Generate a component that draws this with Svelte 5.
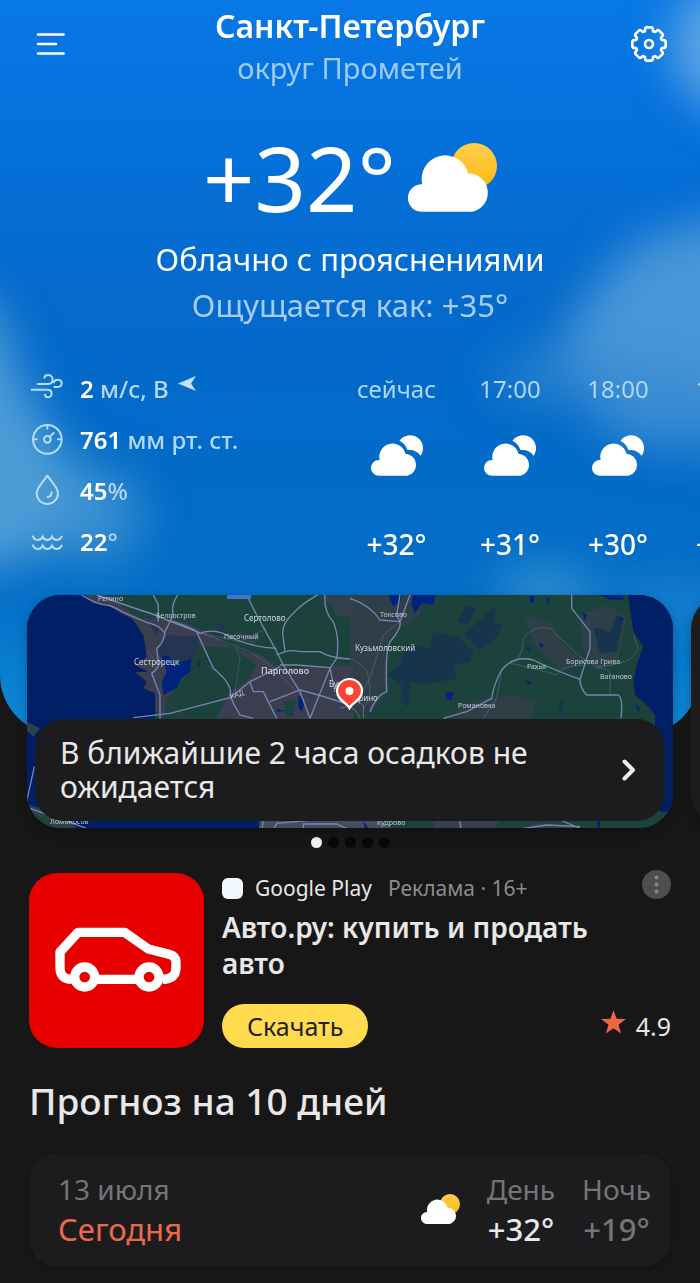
<script>
  const details = [
    { icon: "wind", value: "2", unit: " м/с, В" },
    { icon: "pressure", value: "761", unit: " мм рт. ст." },
    { icon: "humidity", value: "45", unit: "%" },
    { icon: "water", value: "22", unit: "°" },
  ];

  const hours = [
    { time: "сейчас", temp: "+32°" },
    { time: "17:00", temp: "+31°" },
    { time: "18:00", temp: "+30°" },
    { time: "19:00", temp: "+29°" },
  ];

  const slides = 5;
  let active = $state(0);

  // eight rounded teeth around the centre of a 38x38 box
  function gearPath() {
    const at = (r, deg) => {
      const a = (deg * Math.PI) / 180;
      return `${(19 + r * Math.sin(a)).toFixed(2)} ${(19 - r * Math.cos(a)).toFixed(2)}`;
    };
    let d = "";
    for (let i = 0; i < 8; i++) {
      const t = i * 45;
      d += `${i ? "L" : "M"}${at(15, t - 15)}Q${at(17, t - 14)} ${at(16.8, t - 8)}L${at(16.8, t + 8)}`;
      d += `Q${at(17, t + 14)} ${at(15, t + 15)}Q${at(12.6, t + 17)} ${at(13.6, t + 22.5)}Q${at(12.6, t + 28)} ${at(15, t + 30)}`;
    }
    return d + "Z";
  }
</script>

{#snippet sunCloud()}
  <svg class="sun-cloud" viewBox="0 0 268 207" aria-hidden="true">
    <defs>
      <linearGradient id="sun" x1="0" y1="0" x2="0" y2="1">
        <stop offset="0" stop-color="#ffcf4d" />
        <stop offset="1" stop-color="#fdb813" />
      </linearGradient>
    </defs>
    <circle cx="199" cy="69" r="69" fill="url(#sun)" />
    <path
      fill="#fff"
      d="M41 207A41 41 0 0 1 41 124H43A70 70 0 0 1 181 92A58 58 0 0 1 193 207Z"
    />
  </svg>
{/snippet}

<main>
  <section class="sky">
    <svg class="haze" viewBox="0 0 700 732" preserveAspectRatio="xMidYMin slice" aria-hidden="true">
      <defs>
        <filter id="soft" x="-50%" y="-50%" width="200%" height="200%">
          <feGaussianBlur stdDeviation="22" />
        </filter>
      </defs>
      <g filter="url(#soft)">
        <circle cx="738" cy="45" r="68" fill="#5ea6e2" />
        <path fill="#4a96d8" d="M780 205L680 225L630 245L590 290L555 345L590 400L640 440L780 420Z" />
        <path fill="#3389d2" opacity=".7" d="M560 340L490 370L500 395L570 400L610 440L780 470V380L600 350Z" />
        <path fill="#4d9bd6" d="M-80 270L-5 300L20 370L45 420L75 460L110 500L80 540L-80 590Z" />
        <circle cx="98" cy="513" r="48" fill="#3d92d0" opacity=".8" />
        <ellipse cx="545" cy="592" rx="52" ry="30" fill="#3a94d0" opacity=".8" />
        <ellipse cx="670" cy="600" rx="60" ry="20" fill="#2f8dd0" opacity=".6" />
      </g>
    </svg>

    <header>
      <button class="icon-button" aria-label="Меню">
        <svg width="30" height="24" viewBox="0 0 30 24" aria-hidden="true">
          <path
            d="M2 2.500H27.500M2 12H20M2 21.500H27.500"
            stroke="#fff"
            stroke-width="2.600"
            stroke-linecap="round"
          />
        </svg>
      </button>
      <div class="place">
        <h1>Санкт-Петербург</h1>
        <p>округ Прометей</p>
      </div>
      <button class="icon-button" aria-label="Настройки">
        <svg width="38" height="38" viewBox="0 0 38 38" fill="none" stroke="#fff" aria-hidden="true">
          <path d={gearPath()} stroke-width="2.600" stroke-linejoin="round" />
          <circle cx="19" cy="19" r="4" stroke-width="2.600" />
        </svg>
      </button>
    </header>

    <div class="now">
      <div class="temperature">
        <span>+32°</span>
        {@render sunCloud()}
      </div>
      <p>Облачно с прояснениями</p>
      <p class="feels">Ощущается как: +35°</p>
    </div>

    <div class="conditions">
      <ul class="details">
        {#each details as item}
          <li>
            <svg class="detail-icon" viewBox="0 0 96 96" aria-hidden="true">
              {#if item.icon === "wind"}
                <path d="M0 50H50C66 50 65 73 51 73Q43 73 42 65M20 33H52C70 33 68 6 52 6Q42 6 40 14M69 28Q71 20 80 20C96 20 96 42 81 42H70" />
              {:else if item.icon === "pressure"}
                <circle cx="49" cy="46" r="43" />
                <circle cx="49" cy="46" r="10" />
                <path d="M57 38L68 27M49 4V14M7 46H17M81 46H91" />
              {:else if item.icon === "humidity"}
                <path d="M49 2C38 19 17 37 17 55A32 32 0 0 0 81 55C81 37 60 19 49 2ZM62 52Q61 65 50 66" />
              {:else}
                <path d="M6 31Q10 42 21 42Q31 42 35 32Q39 42 49 42Q59 42 63 32Q67 42 77 42Q87 42 92 32M6 58Q10 69 21 69Q31 69 35 59Q39 69 49 69Q59 69 63 59Q67 69 77 69Q87 69 92 59" />
              {/if}
            </svg>
            <span><b>{item.value}</b>{item.unit}</span>
            {#if item.icon === "wind"}
              <svg class="arrow" viewBox="0 0 18 16" aria-hidden="true">
                <path d="M0 7.500L18 0L13 7.500L18 15Z" fill="#c5e0fa" />
              </svg>
            {/if}
          </li>
        {/each}
      </ul>

      <ul class="hours">
        {#each hours as hour}
          <li>
            <span>{hour.time}</span>
            <svg width="52" height="41" viewBox="0 0 157 123" fill="#fff" aria-hidden="true">
              <path d="M24 123A24 24 0 0 1 24 75H26A40 40 0 0 1 104 56A34 34 0 0 1 110 123Z" />
              <path d="M86 17A39 39 0 0 1 150 62A43 43 0 0 0 110 45A50 50 0 0 0 86 17Z" />
            </svg>
            <b>{hour.temp}</b>
          </li>
        {/each}
      </ul>
    </div>
  </section>

  <section class="carousel">
    <article class="map-card">
      <svg class="map" viewBox="0 0 646 233" preserveAspectRatio="xMidYMid slice" aria-hidden="true">
        <rect width="646" height="233" fill="#1b433c" />

        <!-- west: built-up land, forest and the gulf -->
        <g transform="translate(-27 -10) scale(.33333)">
          <g fill="#3b3e4f">
            <path d="M240 20H480L520 100L620 140L700 190L780 210L830 240L900 250L1060 240V700H820L700 400H480L400 250Z" />
            <path d="M500 60L560 90L640 130L760 180L780 160L690 130L620 100ZM860 60L920 80L900 130L860 110ZM960 20H1060V100L1010 90Z" opacity=".7" />
          </g>
          <g fill="#1b433c">
            <path d="M300 20H560L620 90L720 120L700 150L610 130L520 100L420 100Z" />
            <path d="M590 180L700 190L770 240L740 290L690 320L650 400H490L500 340L560 270Z" />
            <path d="M760 40H950L1000 130L990 200L870 200L800 140Z" />
            <path d="M850 350L890 345L880 380L860 400ZM1010 100H1060V200H1020Z" />
          </g>
          <path fill="#233552" d="M500 150L590 155L600 180L570 230L500 240L470 200ZM650 115L680 120L670 140L650 135ZM450 120L480 130L470 150Z" />
          <path
            fill="#001f66"
            d="M80 20H245L280 55L330 65L400 105L430 150L440 215L405 240L445 260L405 262L440 290L430 310L465 325V400L400 410L300 600H80Z"
          />
          <path
            fill="#00237d"
            d="M485 210L510 215L520 240L575 220L570 260L545 280L530 310L490 330L485 290L500 260ZM595 230L605 240L595 242ZM895 330L915 350L905 380L895 365ZM830 372L860 378L830 380ZM870 390L880 385V392Z"
          />
        </g>

        <!-- east: forest, woodland lakes and the big lake -->
        <g transform="translate(323 -10) scale(.33333)">
          <path fill="#3b3e4f" d="M0 20H230L210 90L150 130L110 170L115 320L60 380H0ZM520 90L600 110L650 190L700 230L640 260L560 190ZM500 330L560 350L540 400H300L360 350L420 340ZM690 90L770 60L830 100L800 240L740 250L700 190Z" opacity=".65" />
          <path
            fill="#17344d"
            d="M250 140L330 160L370 200L360 230L310 240L320 280L220 300L180 290L175 365L150 350L155 300L110 270L150 240L170 180L240 190ZM320 110L350 60L380 70L350 120ZM340 150L440 60L430 110L460 120L430 170L390 195ZM730 125L780 140L800 90L820 100L800 200L750 205ZM530 180L545 185L540 205L527 195ZM625 350L638 348V380H625Z"
          />
          <path
            fill="#00237d"
            d="M110 20H160L150 50L130 65ZM190 20H260L250 60L215 55L195 85L185 60ZM540 30L555 35L550 55L540 50ZM590 40L600 35L595 60ZM730 20H820V45L780 45ZM695 80L710 90L705 110ZM568 170L582 180L573 193ZM610 160L620 170ZM525 287L545 292L535 300ZM285 325L310 320L305 345L290 342ZM262 350L275 360ZM810 95L822 100L810 115ZM855 355L870 375L865 380Z"
          />
          <path
            fill="#001f66"
            d="M833 20H975V680H930L915 600V390L890 360L855 330L850 290L860 240L880 185L850 140Z"
          />
        </g>

        <!-- the strip left of and below the message -->
        <g transform="translate(-27 105) scale(.33333)">
          <path fill="#001f66" d="M80 100L120 110V320H80Z" />
          <path fill="#2c4149" d="M80 65L120 85L100 110L80 90ZM80 310L150 340L260 390H80Z" />
          <path fill="#1b433c" d="M90 340L150 360L160 390H80Z" />
          <path fill="#001f66" d="M200 345H800V400H240Z" />
          <path fill="#454d60" d="M780 350H1120L1200 400H775Z" />
          <path fill="#3b3e4f" d="M1300 360H1500L1480 390H1300ZM1600 370L1740 375V390H1580Z" />
          <path fill="#00237d" d="M1090 362L1110 390H1095ZM1790 360H1800V390H1792Z" />
          <path
            fill="none"
            stroke="#7885b4"
            stroke-width="4"
            d="M80 305L103 200M90 325L160 350L260 385M785 390L790 362M820 390L830 370L920 362M910 390V372H1010L1050 390M1380 362L1383 390M1540 390L1640 375L1740 380M1680 360L1740 385"
          />
        </g>

        <g fill="none" stroke="#7885b4" stroke-width="4" transform="translate(-27 -10) scale(.33333)">
          <path d="M245 30Q290 60 330 62Q350 70 370 82L440 112Q480 120 495 145Q490 175 470 190L475 230Q480 250 455 265L480 330V400" />
          <path d="M290 30L420 75Q470 90 500 105L590 140L640 250Q700 300 690 330Q700 360 720 390L760 400" />
          <path d="M455 20L475 60V110M540 20Q510 60 520 90L495 140" />
          <path d="M500 105Q560 120 600 145Q640 130 680 150Q740 185 830 190" />
          <path d="M740 30L770 90L830 200L850 240L900 320L930 400" />
          <path d="M960 25Q900 60 880 85Q840 120 850 160L855 200M975 25Q970 80 1000 110Q1020 160 1010 220L990 250L930 400" />
          <path d="M830 210Q870 190 900 200H960Q990 220 1050 222M840 240H890L990 248" />
          <path d="M400 398L510 385L690 338L750 290L840 245M750 290L760 320H790L830 400M810 350L900 315Q960 330 1050 360M990 250L1005 320" />
          <path stroke-width="2" opacity=".5" d="M500 105L620 150L750 200L810 240L920 350M445 200L470 235L455 270M705 180L720 220L705 320M600 145L720 170L800 130" />
        </g>
        <g fill="none" stroke="#7885b4" stroke-width="4" transform="translate(323 -10) scale(.33333)">
          <path d="M0 40Q60 60 90 105L150 110L180 30M150 110Q155 130 120 170Q105 200 110 320Q80 330 60 380M150 30L140 90L150 110" />
          <path d="M280 400L350 380L425 340Q430 300 455 255Q490 210 550 225Q600 250 690 283L720 190V140L665 70V20M690 283Q690 310 710 330H805Q820 340 813 400" />
          <path stroke-width="2" opacity=".6" d="M0 220Q60 250 55 280Q70 330 40 370M150 110L100 150L60 280L30 330M490 235Q520 210 520 160Q550 120 600 130Q620 150 690 215L740 245Q850 240 865 190L850 150M480 235Q560 250 620 270Q640 240 700 240M455 255L440 340L400 400M740 250Q790 240 780 300V330" />
          <path stroke-width="2" d="M0 340L40 360V400M-30 370Q10 350 30 400" />
        </g>

        <rect x="200" y="-3" width="24" height="7" fill="#4571d2" />
        <g class="labels">
          <text x="71" y="6">Репино</text>
          <text x="129" y="23">Белоостров</text>
          <text class="town" x="217" y="26">Сертолово</text>
          <text x="197" y="44">Песочный</text>
          <text class="town" x="107" y="70">Сестрорецк</text>
          <text class="town strong" x="234" y="79">Парголово</text>
          <text x="353" y="22">Токсово</text>
          <text class="town" x="328" y="56">Кузьмоловский</text>
          <text class="town" x="302" y="92">Бугры</text>
          <text class="town" x="320" y="106">Мурино</text>
          <text x="500" y="74">Рахья</text>
          <text x="539" y="69">Борисова Грива</text>
          <text x="573" y="84">Ваганово</text>
          <text x="431" y="113">Романовка</text>
          <text x="23" y="229">Ломоносов</text>
          <text x="350" y="230">Кудрово</text>
          <text x="204" y="104" transform="rotate(-18 204 104)">КАД</text>
        </g>

        <path
          d="M322.500 113C320 108 310 105 310 96A12.500 12 0 0 1 335 96C335 105 325 108 322.500 113Z"
          fill="#ff4433"
          stroke="#fff"
          stroke-width="2.200"
        />
        <circle cx="322.500" cy="96" r="4" fill="#fff" />
      </svg>
      <button class="message">
        <span>В ближайшие 2 часа осадков не ожидается</span>
        <svg width="14" height="22" viewBox="0 0 14 22" aria-hidden="true">
          <path
            d="M2.500 2.500L11 11L2.500 19.500"
            fill="none"
            stroke="#ececec"
            stroke-width="4"
            stroke-linecap="round"
            stroke-linejoin="round"
          />
        </svg>
      </button>
    </article>
    <article class="next-card"></article>
  </section>

  <div class="dots">
    {#each Array(slides) as _, i}
      <button
        class:active={i === active}
        aria-label={`Слайд ${i + 1}`}
        onclick={() => (active = i)}
      ></button>
    {/each}
  </div>

  <section class="ad">
    <svg class="app-icon" viewBox="0 0 525 525" aria-hidden="true">
      <g transform="translate(-88 -38)" fill="none" stroke="#fff" stroke-width="28" stroke-linejoin="round">
        <path d="M215 357Q181 356 181 322V275L235 216H375L446 266L508 282Q529 288 529 305V322Q529 356 490 357M290 357H412" />
        <circle cx="255" cy="350" r="30" />
        <circle cx="448" cy="350" r="30" />
      </g>
    </svg>
    <div class="ad-body">
      <div class="ad-source">
        <i></i>
        <span>Google Play</span>
        <small>Реклама · 16+</small>
        <button class="more" aria-label="Ещё">
          <svg width="29" height="29" viewBox="0 0 29 29" aria-hidden="true">
            <circle cx="14.500" cy="14.500" r="14.500" fill="#4e4e4e" />
            <g fill="#858585">
              <circle cx="14.500" cy="7.500" r="2" />
              <circle cx="14.500" cy="14.500" r="2" />
              <circle cx="14.500" cy="21.500" r="2" />
            </g>
          </svg>
        </button>
      </div>
      <h2>Авто.ру: купить и продать авто</h2>
      <div class="ad-action">
        <button class="download">Скачать</button>
        <span class="rating">
          <svg width="25" height="24" viewBox="0 0 25 24" aria-hidden="true">
            <path
              d="M12.500 0L15.600 8.700L25 9L17.500 14.700L20.200 23.500L12.500 18.300L4.800 23.500L7.500 14.700L0 9L9.400 8.700Z"
              fill="#f0644a"
            />
          </svg>
          4.9
        </span>
      </div>
    </div>
  </section>

  <section class="forecast">
    <h2>Прогноз на 10 дней</h2>
    <article class="day">
      <div class="date">
        <span>13 июля</span>
        <b>Сегодня</b>
      </div>
      {@render sunCloud()}
      <div class="part">
        <span>День</span>
        <b>+32°</b>
      </div>
      <div class="part night">
        <span>Ночь</span>
        <b>+19°</b>
      </div>
    </article>
  </section>
</main>

<style>
  :global(body) {
    margin: 0;
    background: #171717;
  }

  main {
    overflow: hidden;
    font-family: "Noto Sans", "Open Sans", sans-serif;
    color: #e8e8e8;
  }

  h1,
  h2,
  p,
  ul {
    margin: 0;
    padding: 0;
    list-style: none;
  }

  button {
    padding: 0;
    border: 0;
    background: none;
    color: inherit;
    font: inherit;
    cursor: pointer;
  }

  svg {
    display: block;
    flex: none;
  }

  .sky {
    position: relative;
    z-index: 0;
    padding: 4px 0 168px;
    overflow: hidden;
    border-radius: 0 0 60px 60px;
    color: #fff;
    background: linear-gradient(
      #0878e6,
      #0470da 150px,
      #056acb 300px,
      #026bc8 470px,
      #036fc8 590px,
      #0c87d4 720px
    );
  }

  .haze {
    position: absolute;
    top: 0;
    left: 0;
    z-index: -1;
    width: 100%;
    height: 100%;
  }

  header {
    display: grid;
    grid-template-columns: 38px 1fr 38px;
    align-items: start;
    padding: 0 32px;
  }

  .icon-button {
    display: grid;
    place-items: center;
    height: 80px;
  }

  .place {
    text-align: center;
  }

  h1 {
    font-size: 32px;
    font-weight: 600;
    line-height: 44px;
  }

  .place p {
    font-size: 29px;
    line-height: 40px;
    color: #9ccaf6;
  }

  .now {
    padding-top: 34px;
    text-align: center;
    font-size: 31px;
    line-height: 46px;
  }

  .temperature {
    display: flex;
    justify-content: center;
    align-items: baseline;
    gap: 12px;
    margin-bottom: 4px;
    font-size: 90px;
    line-height: 110px;
  }

  .temperature .sun-cloud {
    width: 89px;
  }

  .feels {
    color: #a5cdf4;
  }

  .conditions {
    display: grid;
    grid-template-columns: 326px 1fr;
    padding: 35px 0 0 31px;
  }

  .details li {
    display: flex;
    align-items: center;
    height: 51px;
    gap: 17px;
    font-size: 24px;
    font-weight: 500;
    color: #b4d7f8;
  }

  .details b {
    font-weight: 600;
    color: #fff;
  }

  .detail-icon {
    width: 32px;
    height: 32px;
    fill: none;
    stroke: #b4dcf6;
    stroke-width: 6;
    stroke-linecap: round;
  }

  .arrow {
    width: 18px;
    height: 16px;
    margin: 0 0 10px -8px;
  }

  .hours {
    display: flex;
    gap: 40px;
    min-width: 0;
    line-height: 51px;
  }

  .hours li {
    display: flex;
    flex-direction: column;
    flex: none;
    align-items: center;
    justify-content: space-between;
    min-width: 68px;
    font-size: 24px;
    color: #add6f7;
  }

  .hours b {
    font-size: 28px;
    line-height: 45px;
    font-weight: 500;
    color: #fff;
  }

  .hours svg {
    margin-bottom: 25px;
  }

  .carousel {
    position: relative;
    z-index: 1;
    display: flex;
    gap: 18px;
    margin-top: -140px;
    padding: 0 27px;
  }

  .map-card,
  .next-card {
    position: relative;
    box-sizing: border-box;
    flex: 0 0 100%;
    border-radius: 34px;
    overflow: hidden;
    background: #1c1c1e;
    box-shadow: 0 4px 12px #0004;
  }

  .map-card {
    padding: 124px 8px 7px;
  }

  .map {
    position: absolute;
    top: 0;
    left: 0;
    width: 100%;
    height: 100%;
  }

  .labels {
    fill: #bfc6d6;
    font-size: 7px;
  }

  .labels .town {
    font-size: 8px;
    fill: #d3d8e4;
  }

  .labels .strong {
    font-size: 9px;
    font-weight: 500;
  }

  .message {
    position: relative;
    display: flex;
    align-items: center;
    justify-content: space-between;
    gap: 32px;
    width: 100%;
    padding: 17px 29px 17px 25px;
    border-radius: 28px;
    background: #1c1c1e;
    text-align: left;
    font-size: 30px;
    line-height: 34px;
  }

  .dots {
    display: flex;
    justify-content: center;
    gap: 6px;
    padding: 9px 0 25px;
  }

  .dots button {
    width: 11px;
    height: 11px;
    border-radius: 50%;
    background: #080808;
  }

  .dots .active {
    background: #f0f0f0;
  }

  .ad {
    display: flex;
    gap: 18px;
    padding: 0 29px;
  }

  .app-icon {
    width: 175px;
    height: 175px;
    border-radius: 28px;
    background: #e60000;
  }

  .ad-body {
    display: flex;
    flex: 1;
    flex-direction: column;
  }

  .ad-source {
    display: flex;
    align-items: center;
    font-size: 21px;
    line-height: 30px;
  }

  .ad-source i {
    width: 21px;
    height: 21px;
    margin-right: 12px;
    border-radius: 6px;
    background: #eff7ff;
  }

  .ad-source small {
    margin-left: 16px;
    font-size: 21px;
    color: #8c8c8c;
  }

  .more {
    margin: -8px 0 0 auto;
  }

  .ad h2 {
    margin-top: 6px;
    padding-right: 48px;
    font-size: 28px;
    font-weight: 600;
    line-height: 36px;
  }

  .ad-action {
    display: flex;
    align-items: center;
    justify-content: space-between;
    margin-top: auto;
  }

  .download {
    height: 44px;
    padding: 0 25px;
    border-radius: 22px;
    background: #ffdb4d;
    color: #222;
    font-size: 25px;
  }

  .rating {
    display: flex;
    align-items: center;
    gap: 10px;
    font-size: 25px;
  }

  .rating svg {
    margin-bottom: 8px;
  }

  .forecast {
    padding: 25px 29px 16px;
  }

  .forecast h2 {
    font-size: 37px;
    font-weight: 500;
    line-height: 56px;
  }

  .day {
    display: flex;
    align-items: center;
    gap: 27px;
    margin-top: 24px;
    padding: 16px 20px 18px 29px;
    border-radius: 28px;
    background: #1c1c1e;
    font-size: 28px;
    line-height: 40px;
    color: #757575;
    box-shadow: 0 2px 4px #0003;
  }

  .day .sun-cloud {
    width: 39px;
  }

  .day b {
    display: block;
    font-size: 31px;
    font-weight: 400;
  }

  .date {
    flex: 1;
  }

  .date b {
    color: #eb6a4e;
  }

  .part {
    text-align: center;
  }

  .part b {
    font-weight: 500;
    color: #e8e8e8;
  }

  .day .night b {
    color: #757575;
  }
</style>
